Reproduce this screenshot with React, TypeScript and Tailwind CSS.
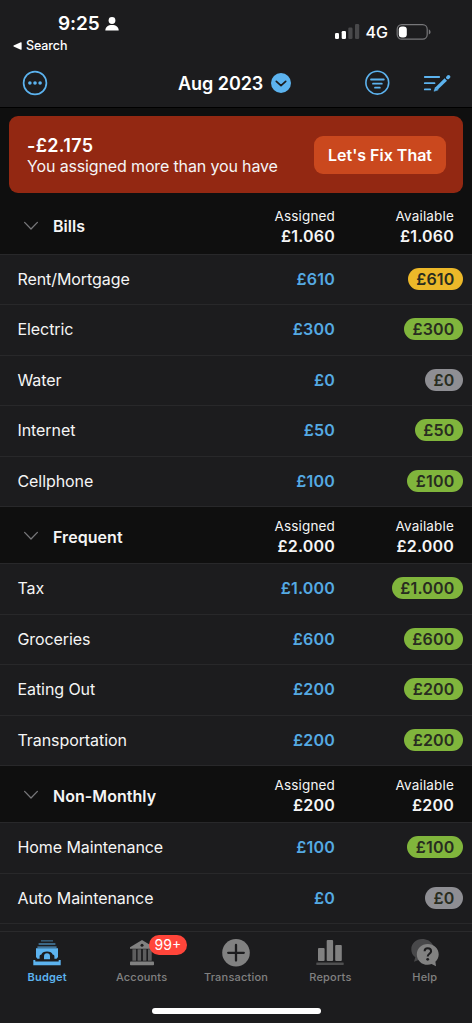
import clsx from 'clsx';

type Tone = 'green' | 'yellow' | 'gray';

interface Category {
  name: string;
  assigned: string;
  available: string;
  tone: Tone;
}

interface Group {
  name: string;
  assigned: string;
  available: string;
  categories: Category[];
}

const GROUPS: Group[] = [
  {
    name: 'Bills',
    assigned: '£1.060',
    available: '£1.060',
    categories: [
      { name: 'Rent/Mortgage', assigned: '£610', available: '£610', tone: 'yellow' },
      { name: 'Electric', assigned: '£300', available: '£300', tone: 'green' },
      { name: 'Water', assigned: '£0', available: '£0', tone: 'gray' },
      { name: 'Internet', assigned: '£50', available: '£50', tone: 'green' },
      { name: 'Cellphone', assigned: '£100', available: '£100', tone: 'green' },
    ],
  },
  {
    name: 'Frequent',
    assigned: '£2.000',
    available: '£2.000',
    categories: [
      { name: 'Tax', assigned: '£1.000', available: '£1.000', tone: 'green' },
      { name: 'Groceries', assigned: '£600', available: '£600', tone: 'green' },
      { name: 'Eating Out', assigned: '£200', available: '£200', tone: 'green' },
      { name: 'Transportation', assigned: '£200', available: '£200', tone: 'green' },
    ],
  },
  {
    name: 'Non-Monthly',
    assigned: '£200',
    available: '£200',
    categories: [
      { name: 'Home Maintenance', assigned: '£100', available: '£100', tone: 'green' },
      { name: 'Auto Maintenance', assigned: '£0', available: '£0', tone: 'gray' },
    ],
  },
];

const TONES: Record<Tone, string> = {
  green: 'bg-[#80b53c]',
  yellow: 'bg-[#ecb829]',
  gray: 'bg-[#8e8e93]',
};

function StatusBar() {
  return (
    <div className="flex h-[58px] justify-between">
      <div className="pl-[13px] pt-[13px]">
        <div className="flex items-center gap-[5px] pl-[45px]">
          <span className="text-[19px] font-semibold leading-[22px] tracking-[-0.1px]">9:25</span>
          <svg viewBox="0 0 14 14" className="h-3.5 w-3.5" fill="currentColor">
            <circle cx="7" cy="3.5" r="3.4" />
            <path d="M0.3 13.6C0.3 10 3 8 7 8s6.7 2 6.7 5.6z" />
          </svg>
        </div>
        <div className="mt-[3px] flex items-center gap-1">
          <svg viewBox="0 0 9 8" className="h-2 w-[9px]" fill="currentColor">
            <path d="M0.6 3.4 7.8 0.2Q8.6 0 8.6 0.8v6.4Q8.6 8 7.8 7.8L0.6 4.6Q0 4 0.6 3.4z" />
          </svg>
          <span className="text-[12.5px] font-medium leading-[15px] tracking-[-0.1px]">Search</span>
        </div>
      </div>
      <div className="mt-6 flex h-4 gap-2 self-start pr-[40px]">
        <svg viewBox="0 0 25 16" className="h-4 w-[25px]" fill="currentColor">
          <rect x="0" y="9" width="4" height="6" rx="1.2" />
          <rect x="6.7" y="7" width="4.3" height="8" rx="1.2" />
          <rect x="13.3" y="3.5" width="4.2" height="11.5" rx="1.2" className="fill-[#48484a]" />
          <rect x="20" y="0" width="4.2" height="15" rx="1.2" className="fill-[#48484a]" />
        </svg>
        <span className="-ml-0.5 text-[16px] font-medium leading-[17px]">4G</span>
        <svg viewBox="0 0 36 16" className="h-4 w-9">
          <rect x="1.2" y="0.6" width="30" height="14.6" rx="4.6" className="fill-none stroke-[#77777a]" strokeWidth="1.2" />
          <rect x="2.8" y="2.4" width="8" height="11" rx="3.2" fill="currentColor" />
          <path d="M32.8 5.2q1.8 1 1.8 2.7t-1.8 2.7z" className="fill-[#77777a]" />
        </svg>
      </div>
    </div>
  );
}

function NavBar() {
  return (
    <div className="flex h-[49px] items-center pl-[22px] pr-[21px] text-[#5cb3ef]">
      <svg viewBox="0 0 26 26" className="h-[26px] w-[26px]">
        <circle cx="13" cy="13" r="11.4" fill="none" stroke="currentColor" strokeWidth="1.7" />
        <g fill="currentColor">
          <circle cx="7.9" cy="13" r="1.8" />
          <circle cx="13" cy="13" r="1.8" />
          <circle cx="18.1" cy="13" r="1.8" />
        </g>
      </svg>
      <div className="ml-[130px] flex items-center gap-2">
        <h1 className="w-[85px] whitespace-nowrap pt-0.5 text-[18px] font-semibold leading-6 tracking-[-0.05px] text-white">Aug 2023</h1>
        <svg viewBox="0 0 20 20" className="h-5 w-5">
          <circle cx="10" cy="10" r="10" fill="currentColor" />
          <path d="m5.3 8.3 4.7 4.4 4.7-4.4" className="stroke-[#1c1c1e]" fill="none" strokeWidth="1.7" strokeLinecap="round" strokeLinejoin="round" />
        </svg>
      </div>
      <svg viewBox="0 0 26 26" className="ml-auto h-[26px] w-[26px]" fill="none" stroke="currentColor" strokeWidth="1.8" strokeLinecap="round">
        <circle cx="13.3" cy="12.7" r="11.4" strokeWidth="1.6" />
        <path d="M7 9.5h12.8M9 13.7h8.8M11 17.7h4.8" />
      </svg>
      <svg viewBox="0 0 28 20" className="ml-[33px] h-5 w-7" fill="none" stroke="currentColor" strokeWidth="1.8" strokeLinecap="round">
        <path d="M1.8 4h14.4M1.8 10.2h9.7M1.8 16.4h5.4" />
        <path d="m13.4 15.6 9.4-9.1" strokeWidth="3.4" strokeLinecap="butt" />
        <path d="m12.3 14.4-1.3 3.9 3.9-1.2z" fill="currentColor" strokeWidth="0.5" />
        <path d="m24.9 4.4.6-.6" strokeWidth="3.6" />
      </svg>
    </div>
  );
}

function GroupHeader({ group, first }: { group: Group; first: boolean }) {
  return (
    <div
      className={clsx(
        'flex items-center border-b border-[#28282a] bg-[#0f0f0f] pl-[23px]',
        first ? 'h-[61.5px] pt-[5.5px]' : 'h-[57px] pt-[3px]'
      )}
    >
      <svg viewBox="0 0 16 10" className="-mt-px h-2.5 w-4" fill="none" stroke="#77777a" strokeWidth="1.3" strokeLinecap="round" strokeLinejoin="round">
        <path d="m1.6 1.4 6.4 6.6 6.4-6.6" />
      </svg>
      <h2 className="ml-3.5 flex-1 text-[16px] font-semibold tracking-[0.05px]">{group.name}</h2>
      <div className="w-[90px] text-right">
        <p className="text-[13.5px] leading-[19px] tracking-[0.16px]">Assigned</p>
        <p className="text-[16px] font-semibold leading-5 tracking-[0.2px]">{group.assigned}</p>
      </div>
      <div className="w-[137px] pr-[18px] text-right">
        <p className="text-[13.5px] leading-[19px] tracking-[0.16px]">Available</p>
        <p className="text-[16px] font-semibold leading-5 tracking-[0.2px]">{group.available}</p>
      </div>
    </div>
  );
}

function CategoryRow({ category }: { category: Category }) {
  return (
    <div className="flex h-[50.5px] shrink-0 items-center border-b border-[#28282a] pb-px pl-[17.5px] pr-[9px]">
      <span className="flex-1 text-[16px] tracking-[-0.08px]">{category.name}</span>
      <span className="w-[90px] text-right text-[16px] font-semibold tracking-[0.2px] text-[#55aae3]">{category.assigned}</span>
      <div className="flex w-32 justify-end">
        <span
          className={clsx(
            'rounded-full px-[8.5px] text-[16px] font-semibold leading-[22px] tracking-[0.18px] text-[#282c20]',
            TONES[category.tone]
          )}
        >
          {category.available}
        </span>
      </div>
    </div>
  );
}

function BudgetIcon() {
  return (
    <svg viewBox="0 0 28 28" className="h-7 w-7" fill="currentColor">
      <path d="M8 1h12v1.6H8z" opacity="0.4" />
      <path d="M5.6 4h16.8v2H5.6z" opacity="0.5" />
      <path d="M4.4 7.3h19.2v1.9H4.4z" opacity="0.6" />
      <path d="M3 9.2h22V18l-1.4 1.8H21.4V17q0-1.6-1.800-1.600Q18.800 12.400 14 12.400T8.400 15.400Q6.600 15.400 6.600 17v2.800H4.400L3 18z" />
      <path d="M11 20.200v-2.600q0-3.300 3-3.300t3 3.300v2.600z" />
      <path d="M.3 21h2v1.400h23.400V21h2v5.200H.3z" />
    </svg>
  );
}

function AccountsIcon() {
  return (
    <svg viewBox="0 0 28 28" className="h-7 w-7" fill="currentColor">
      <path d="M2 9.8V8.200L14 1l12 7.200v1.600z" />
      <circle cx="14" cy="6.2" r="1.5" className="fill-[#1c1c1e]" />
      <path d="M4.4 10.300h3.700v11.500H4.400zM9.600 10.300h3.500v11.500H9.600zM14.900 10.300h3.500v11.500h-3.500zM20 10.300h3.700v11.500H20z" opacity="0.65" />
      <rect x="2" y="22.6" width="24" height="3.7" rx="0.8" />
    </svg>
  );
}

function TransactionIcon() {
  return (
    <svg viewBox="0 0 28 28" className="h-7 w-7">
      <circle cx="14" cy="13.8" r="13.8" fill="currentColor" />
      <path d="M14 6v15.6M6.2 13.8h15.6" className="stroke-[#1c1c1e]" strokeWidth="2.3" strokeLinecap="round" />
    </svg>
  );
}

function ReportsIcon() {
  return (
    <svg viewBox="0 0 28 28" className="h-7 w-7" fill="currentColor">
      <rect x="2" y="9" width="6.6" height="13" rx="0.9" />
      <rect x="10.7" y="1" width="6.4" height="21" rx="0.9" />
      <rect x="19.2" y="6" width="6.6" height="16" rx="0.9" />
      <rect x="0.3" y="23.6" width="27.4" height="2.4" rx="0.4" opacity="0.5" />
    </svg>
  );
}

function HelpIcon() {
  return (
    <svg viewBox="0 0 28 28" className="h-7 w-7">
      <path d="M11 0C5 0 .3 4.5.3 10.2c0 3.600 1.500 6.200 4 8.100L3 22.700l6.500-2.400L22 6C20 2.200 16 0 11 0z" className="fill-[#48484a]" />
      <path d="M16.7 5C10.600 5 5.800 9.600 5.800 15.400s4.700 10.400 10.900 10.400c1.400 0 2.700-.2 3.900-.7l4.400 2.200-.6-4.600c2-1.800 3.300-4.400 3.300-7.300C27.700 9.600 22.900 5 16.700 5z" fill="currentColor" />
      <path d="M13.600 12.200c0-1.800 1.200-2.900 3.100-2.900 2 0 3.400 1.200 3.400 2.900 0 2.500-3.400 2.500-3.400 5.200" fill="none" className="stroke-[#1c1c1e]" strokeWidth="2" />
      <circle cx="16.7" cy="20.3" r="1.4" className="fill-[#1c1c1e]" />
    </svg>
  );
}

const TABS = [
  { label: 'Budget', icon: BudgetIcon, active: true },
  { label: 'Accounts', icon: AccountsIcon, badge: '99+' },
  { label: 'Transaction', icon: TransactionIcon },
  { label: 'Reports', icon: ReportsIcon },
  { label: 'Help', icon: HelpIcon },
];

function TabBar() {
  return (
    <nav className="flex h-[92px] shrink-0 flex-col border-t border-[#2a2a2c] bg-[#1c1c1e]">
      <div className="flex">
        {TABS.map(({ label, icon: Icon, active, badge }) => (
          <div
            key={label}
            className={clsx('flex flex-1 flex-col items-center pt-[7px]', active ? 'text-[#5cb3ef]' : 'text-[#818181]')}
          >
            <div className="relative">
              <Icon />
              {badge && (
                <span className="absolute left-[21.5px] top-[-4px] rounded-full bg-[#ff453a] px-[5.5px] text-[14px] leading-5 text-white">
                  {badge}
                </span>
              )}
            </div>
            <span className={clsx('mt-[3px] text-[11px] leading-[14px] tracking-[0.2px]', active ? 'font-semibold' : 'font-medium')}>
              {label}
            </span>
          </div>
        ))}
      </div>
      <div className="mb-[9px] mt-auto h-[6px] w-[169px] self-center rounded-full bg-white" />
    </nav>
  );
}

export default function App() {
  return (
    <div className="flex h-screen w-full flex-col overflow-hidden bg-[#1c1c1e] font-['Inter',sans-serif] text-[#f5f5f5]">
      <header className="h-[108px] shrink-0 border-b border-black text-white">
        <StatusBar />
        <NavBar />
      </header>
      <main className="min-h-0 flex-1 overflow-hidden">
        <div className="bg-[#0f0f0f] px-[9px] pt-2">
          <div className="flex h-[77px] items-center justify-between rounded-[9px] bg-[#932812] pl-[18px] pr-[17px]">
            <div>
              <p className="pt-px text-[18px] font-semibold leading-[21px] tracking-[0.3px] text-white">-£2.175</p>
              <p className="text-[16px] leading-5 tracking-[-0.14px]">You assigned more than you have</p>
            </div>
            <button type="button" className="h-[38px] w-[132px] whitespace-nowrap rounded-[9px] bg-[#ca481e] text-[16px] font-semibold text-white">
              Let's Fix That
            </button>
          </div>
        </div>
        {GROUPS.map((group, i) => (
          <section key={group.name}>
            <GroupHeader group={group} first={i === 0} />
            {group.categories.map((category) => (
              <CategoryRow key={category.name} category={category} />
            ))}
          </section>
        ))}
      </main>
      <TabBar />
    </div>
  );
}
